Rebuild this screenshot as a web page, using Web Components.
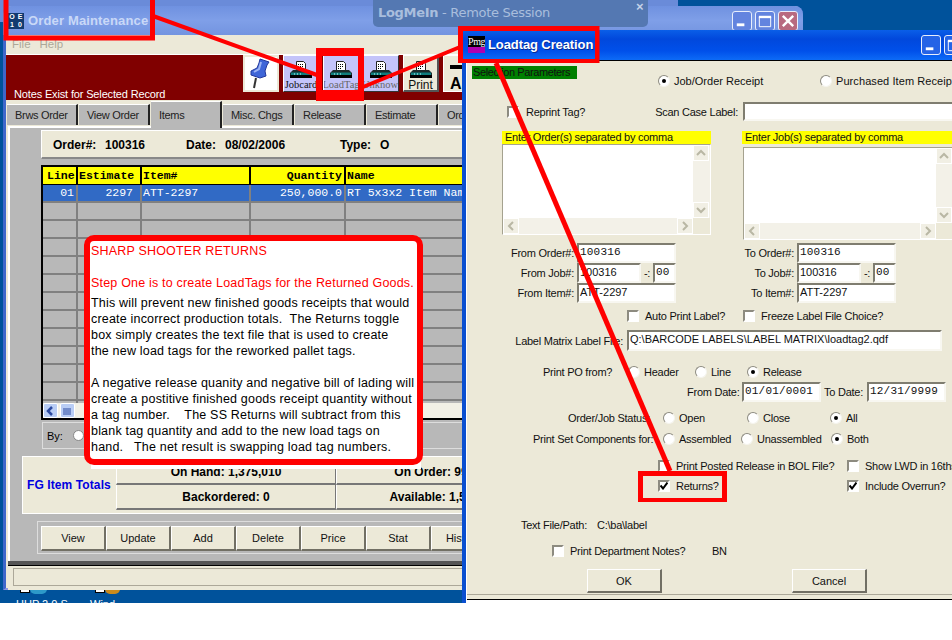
<!DOCTYPE html>
<html>
<head>
<meta charset="utf-8">
<title>Order Maintenance</title>
<style>
	html, body { margin: 0; background: #fff; }
	body { width: 952px; height: 640px; overflow: hidden; position: relative; font: 12px "Liberation Sans", Arial, sans-serif; color: #000; }
</style>
</head>
<body>
<desk-top>
	<order-window></order-window>
	<logmein-bar></logmein-bar>
	<loadtag-dialog></loadtag-dialog>
</desk-top>
<note-layer>SHARP SHOOTER RETURNS

Step One is to create LoadTags for the Returned Goods.</note-layer>

<script>
const SANS = `"Liberation Sans", Arial, sans-serif`;
const MONO = `"Liberation Mono", "Courier New", monospace`;

const PRINTER = `<svg width="24" height="19" viewBox="0 0 24 19">
	<path d="M7.5 .5h7l2 2v7h-9z" fill="#fff" stroke="#222"/>
	<path d="M9 3h1v1H9zM11 3h1v1h-1zM13 3h1v1h-1zM9 5h1v1H9zM11 5h1v1h-1zM13 5h1v1h-1zM9 7h1v1H9zM11 7h1v1h-1z" fill="#000"/>
	<path d="M4 9h16l3 3v2H1v-2z" fill="#1c2a2a"/>
	<path d="M2 11.500h20v2.500H2z" fill="#0e7d7d"/>
	<path d="M5 12.500h1v1H5zM8 12.500h1v1H8zM11 12.500h1v1h-1z" fill="#bff"/>
	<path d="M1 14h22v3H1z" fill="#000"/>
</svg>`;

const CHEVRONS = {
	up: '<polyline points="2,8 6,4 10,8"/>',
	down: '<polyline points="2,4 6,8 10,4"/>',
	left: '<polyline points="8,2 4,6 8,10"/>',
	right: '<polyline points="4,2 8,6 4,10"/>',
};

class DeskTop extends HTMLElement {
	constructor() {
		super();
		this.attachShadow({ mode: 'open' });
		this.shadowRoot.innerHTML = `
			<style>
				:host { display: block; position: relative; width: 952px; height: 603px; overflow: hidden; background: #00529b; }
				#back { position: absolute; left: 0; top: -8px; width: 678px; height: 30px; border-radius: 0 8px 0 0; background: #6a8bd9; }
				.icon { position: absolute; top: 589px; width: 10px; height: 4px; background: #fff; border: 1px solid #000; border-top: 0; box-sizing: border-box; }
				.blob { position: absolute; top: 589px; height: 5px; border-radius: 0 0 10px 10px; }
				.cap { position: absolute; top: 598px; color: #fff; font: 11px ${SANS}; white-space: nowrap; }
			</style>
			<div id="back"></div>
			<div class="icon" style="left:20px"></div>
			<div class="blob" style="left:30px;width:17px;background:#2d9ac9"></div>
			<div class="icon" style="left:95px"></div>
			<div class="blob" style="left:105px;width:15px;background:#c98a1d"></div>
			<div class="cap" style="left:16px">HUP 2.0 S</div>
			<div class="cap" style="left:90px">Wind</div>
			<slot></slot>
		`;
	}
}

class WinButton extends HTMLElement {
	constructor() {
		super();
		this.attachShadow({ mode: 'open' });
		const kind = this.getAttribute('kind');
		const glyph = {
			min: '<rect x="4" y="12" width="8" height="3" fill="#fff"/>',
			max: '<path d="M3.500 5.500h12v10h-12z" fill="none" stroke="#fff"/><rect x="3" y="4" width="13" height="2.500" fill="#fff"/>',
			close: '<path d="M4 4l11 11M15 4L4 15" stroke="#fff" stroke-width="2.500"/>',
		}[kind];
		this.shadowRoot.innerHTML = `
			<style>
				:host { display: block; width: 20px; height: 20px; box-sizing: border-box; border: 1px solid #e8eefc; border-radius: 3px; background: var(--btn, #2a5fe0); }
				:host([kind=close]) { background: var(--close, #c9492c); }
				svg { display: block; margin: 0; }
			</style>
			<svg width="18" height="18" viewBox="0 0 19 19">${glyph}</svg>
		`;
	}
}

class ToolBtn extends HTMLElement {
	constructor() {
		super();
		this.attachShadow({ mode: 'open' });
		this.shadowRoot.innerHTML = `
			<style>
				:host { display: flex; flex-direction: column; align-items: center; box-sizing: border-box; width: 36px; height: 37px; padding-top: 5px; background: #c4c4fa; border: 1px solid #333; border-left-color: #fff; border-top-color: #fff; overflow: hidden; white-space: nowrap; font: 10.500px "Liberation Serif", serif; color: #111; }
				:host([plain]) { background: #ece9d8; font: 12px ${SANS}; border-right: 2px solid #555; border-bottom: 2px solid #555; }
				:host([dim]) { color: #666; }
				svg { flex: none; }
				span { margin-top: -1px; line-height: 12px; }
			</style>
			${PRINTER}
			<span><slot></slot></span>
		`;
	}
}

class TabBtn extends HTMLElement {
	constructor() {
		super();
		this.attachShadow({ mode: 'open' });
		this.shadowRoot.innerHTML = `
			<style>
				:host { display: block; box-sizing: border-box; width: 71px; height: 21px; margin-top: 2px; padding-left: 8px; background: #b8b8b8; border-right: 2px solid #222; border-top: 1px solid #fff; font: 11px/20px ${SANS}; color: #222; white-space: nowrap; letter-spacing: -.3px; overflow: hidden; }
				:host([active]) { height: 27px; margin-top: -1px; margin-bottom: -3px; z-index: 1; position: relative; line-height: 26px; }
			</style>
			<slot></slot>
		`;
	}
}

class OrderGrid extends HTMLElement {
	constructor() {
		super();
		this.attachShadow({ mode: 'open' });
		const cols = '33px 62px 107px 93px 140px';
		let rows = '';
		for (let i = 0; i < 12; i++) {
			rows += '<div class="r"><i></i><i></i><i></i><i></i><i></i></div>';
		}
		this.shadowRoot.innerHTML = `
			<style>
				:host { display: block; box-sizing: border-box; width: 450px; height: 255px; border-top: 2px solid #000; border-left: 2px solid #000; border-bottom: 2px solid #000; background: #b8b8b8; font: 11.500px ${MONO}; position: relative; overflow: hidden; }
				.h, .r { display: grid; grid-template-columns: ${cols}; column-gap: 2px; }
				.h { height: 18px; background: #000; }
				.h b { background: #ff0; line-height: 17px; padding: 0 2px 0 1px; white-space: nowrap; overflow: hidden; border-bottom: 1px solid #000; }
				.h b:first-child { padding-left: 4px; }
				.right { text-align: right; }
				.r { height: 18px; box-sizing: border-box; border-bottom: 2px solid #808080; background: #808080; }
				.r i, .r span { background: #b8b8b8; display: block; }
				.sel span { background: #316ac5; color: #fff; line-height: 16px; padding: 0 2px 0 1px; white-space: pre; overflow: hidden; }
				.body { height: 218px; overflow: hidden; }
				.bar { display: flex; gap: 2px; height: 15px; background: #f2f0e6; }
				.bar div { width: 15px; background: #b9cdf5; border: 1px solid #fff; box-sizing: border-box; border-radius: 2px; text-align: center; color: #24408c; }
				svg { display: block; fill: none; stroke: #2c4aa0; stroke-width: 2.500; margin: 1px 0 0 0; }
			</style>
			<div class="h"><b>Line</b><b>Estimate</b><b>Item#</b><b class="right">Quantity</b><b>Name</b></div>
			<div class="body">
				<div class="r sel"><span class="right">01</span><span class="right" style="padding-right:7px">2297</span><span>ATT-2297</span><span class="right">250,000.0</span><span>RT 5x3x2 Item Name</span></div>
				${rows}
			</div>
			<div class="bar">
				<div><svg width="12" height="12" viewBox="0 0 12 12">${CHEVRONS.left}</svg></div>
				<div><svg width="12" height="12" viewBox="0 0 12 12"><path d="M3 3v7M5 3v7M7 3v7M9 3v7" stroke-width="1"/></svg></div>
			</div>
		`;
	}
}

class OrderWindow extends HTMLElement {
	constructor() {
		super();
		this.attachShadow({ mode: 'open' });
		this.shadowRoot.innerHTML = `
			<style>
				:host { display: flex; flex-direction: column; position: absolute; left: 3px; top: 6px; width: 800px; height: 584px; box-sizing: border-box; border: 3px solid #3f67cb; border-top: 0; border-bottom: 2px solid #8a96e4; border-radius: 8px 8px 0 0; background: #ece9d8; font: 12px ${SANS}; --btn: #6384df; --close: #b86a80; }
				#title { display: flex; align-items: center; height: 29px; flex: none; margin: 0 -3px; padding: 0 5px; background: linear-gradient(#6f91e0, #7f9fe8 50%, #7394e0); border-radius: 8px 8px 0 0; color: #c9d8f7; font: bold 13px ${SANS}; letter-spacing: .15px; }
				#logo { display: grid; grid-template-columns: 8px 8px; width: 16px; height: 16px; margin: 0 4px 0 0; background: #123a70; font: bold 7px/8px ${SANS}; color: #fff; text-align: center; letter-spacing: 0; flex: none; }
				#btns { margin-left: auto; display: flex; gap: 3px; }
				#menu { display: flex; gap: 9px; height: 19px; flex: none; box-sizing: content-box; padding-left: 6px; font-size: 11.500px; line-height: 18px; color: #aca899; border-bottom: 1px solid #fff; }
				#band { display: flex; height: 45px; background: #800000; flex: none; }
				#note { width: 237px; box-sizing: border-box; padding: 0 0 0 8px; align-self: flex-end; color: #fff; font-size: 11px; line-height: 12px; white-space: nowrap; letter-spacing: -.15px; }
				#tools { display: flex; align-items: flex-start; gap: 4px; }
				#pin { box-sizing: border-box; width: 36px; height: 37px; background: #fff; border: 2px solid #ece9d8; }
				#add { box-sizing: border-box; width: 50px; height: 37px; padding: 4px 0 0 6px; background: #ece9d8; border: 1px solid #fff; font: bold 16px/16px ${SANS}; overflow: hidden; }
				#add svg { display: block; margin-bottom: 1px; }
				#tabs { display: flex; gap: 1px; height: 26px; padding: 2px 0 0 1px; box-sizing: border-box; flex: none; }
				#panel { flex: 1; margin-left: 2px; border-top: 2px solid #fff; border-left: 2px solid #fff; background: #b8b8b8; padding: 2px 0 0 31px; display: flex; flex-direction: column; min-height: 0; }
				#head { display: flex; align-items: center; box-sizing: border-box; width: 440px; height: 29px; flex: none; padding: 2px 0 0 11px; background: #ece9d8; border: 1px solid #fff; border-right-color: #888; border-bottom: 2px solid #888; font: bold 12px ${SANS}; white-space: pre; }
				#head span { display: block; flex: none; }
				order-grid { margin-top: 6px; flex: none; }
				#by { display: flex; align-items: center; gap: 10px; box-sizing: border-box; width: 420px; height: 27px; flex: none; margin: 2px 0 0 1px; padding-left: 4px; border: 1px solid #ddd; border-right: 0; font-size: 11px; }
				#radio { width: 11px; height: 11px; border-radius: 50%; background: #fff; border: 1px solid #888; box-sizing: border-box; }
				#totals { display: flex; align-items: center; box-sizing: border-box; width: 700px; height: 58px; flex: none; margin: 7px 0 0 -19px; background: #ece9d8; border: 1px solid #fff; }
				#totals > b { width: 93px; padding-left: 4px; color: #0000e0; font: bold 12px ${SANS}; letter-spacing: .1px; white-space: nowrap; box-sizing: border-box; flex: none; }
				#cells { display: grid; grid-template-columns: 220px 220px; grid-auto-rows: 25px; }
				#cells b { text-align: center; font: bold 12px/24px ${SANS}; border-left: 1px solid #fff; border-right: 1px solid #777; border-bottom: 2px solid #777; box-sizing: border-box; white-space: nowrap; }
				#actions { display: flex; box-sizing: border-box; width: 560px; height: 33px; flex: none; margin: 7px 0 0 -4px; padding: 4px 3px; border: 1px solid #ddd; }
				#actions button { width: 65px; height: 25px; padding: 0; flex: none; background: #ece9d8; border: 1px solid #fff; border-right: 2px solid #716f64; border-bottom: 2px solid #716f64; font: 11px ${SANS}; color: #111; }
				#dark { height: 5px; flex: none; box-sizing: border-box; margin-top: 7px; margin-left: -33px; background: #555; border-bottom: 1px solid #000; }
				#status { flex: 1; padding: 2px 0 4px 5px; box-sizing: border-box; margin-left: -33px; background: #ece9d8; }
				#status div { height: 16px; border: 1px solid #aca899; border-right: 0; }
			</style>
			<div id="title">
				<div id="logo"><span>O</span><span>E</span><span>1</span><span>0</span></div>
				Order Maintenance
				<div id="btns"><win-button kind="min"></win-button><win-button kind="max"></win-button><win-button kind="close"></win-button></div>
			</div>
			<div id="menu"><span>File</span><span>Help</span></div>
			<div id="band">
				<div id="note">Notes Exist for Selected Record</div>
				<div id="tools">
					<div id="pin"><svg width="32" height="33" viewBox="0 0 32 33"><path d="M15 2l9 3-2 3-2 6 1 5-6 2-9-3v-4l6-3 2-5z" fill="#3f66d8" stroke="#23389c"/><path d="M16 5l-2 7-5 3" fill="none" stroke="#9db4f5" stroke-width="2"/><path d="M11 21L9 31" stroke="#333" stroke-width="2"/></svg></div>
					<tool-btn>Jobcard</tool-btn>
					<tool-btn dim>LoadTag</tool-btn>
					<tool-btn dim>Unknow.</tool-btn>
					<tool-btn plain>Print</tool-btn>
					<div id="add"><svg width="28" height="15" viewBox="0 0 28 15"><path d="M0 5h28v4H0zM12 0h4v15h-4z" fill="#000"/></svg>ADD</div>
				</div>
			</div>
			<div id="tabs">
				<tab-btn>Brws Order</tab-btn><tab-btn>View Order</tab-btn><tab-btn active>Items</tab-btn><tab-btn>Misc. Chgs</tab-btn><tab-btn>Release</tab-btn><tab-btn>Estimate</tab-btn><tab-btn>Order</tab-btn>
			</div>
			<div id="panel">
				<div id="head"><span style="width:52px">Order#:</span><span style="width:81px">100316</span><span style="width:39px">Date:</span><span style="width:115px">08/02/2006</span><span style="width:40px">Type:</span><span>O</span></div>
				<order-grid></order-grid>
				<div id="by">By: <div id="radio"></div></div>
				<div id="totals">
					<b>FG Item Totals</b>
					<div id="cells"><b>On Hand: 1,375,010</b><b>On Order: 995,000</b><b>Backordered: 0</b><b>Available: 1,500,000</b></div>
				</div>
				<div id="actions">
					<button>View</button><button>Update</button><button>Add</button><button>Delete</button><button>Price</button><button>Stat</button><button>History</button>
				</div>
				<div id="dark"></div>
				<div id="status"><div></div></div>
			</div>
		`;
	}
}

class LogmeinBar extends HTMLElement {
	constructor() {
		super();
		this.attachShadow({ mode: 'open' });
		this.shadowRoot.innerHTML = `
			<style>
				:host { display: block; position: absolute; left: 373px; top: 0; width: 275px; height: 27px; box-sizing: border-box; padding-left: 5px; border-radius: 0 0 5px 5px; background: #5478b2; color: #a9bedd; font: 13px/25px "DejaVu Sans", Verdana, sans-serif; white-space: nowrap; }
				b { font-weight: bold; }
				i { position: absolute; left: 263px; top: 0; font: bold 13px/14px ${SANS}; color: #c4d2e8; }
				span { letter-spacing: -.3px; }
			</style>
			<span><b>LogMeIn</b> - Remote Session</span><i>×</i>
		`;
	}
}

class XpRadio extends HTMLElement {
	constructor() {
		super();
		this.attachShadow({ mode: 'open' });
		this.shadowRoot.innerHTML = `
			<style>
				:host { display: flex; align-items: center; flex: none; gap: 4px; white-space: nowrap; }
				i { display: block; flex: none; box-sizing: border-box; width: 12px; height: 12px; border-radius: 50%; background: #fff; border: 1px solid; border-color: #8d8b80 #f5f4ee #f5f4ee #8d8b80; position: relative; }
				:host([on]) i::after { content: ""; position: absolute; left: 3px; top: 3px; width: 4px; height: 4px; border-radius: 50%; background: #000; }
			</style>
			<i></i><span><slot></slot></span>
		`;
	}
}

class XpCheck extends HTMLElement {
	constructor() {
		super();
		this.attachShadow({ mode: 'open' });
		this.shadowRoot.innerHTML = `
			<style>
				:host { display: flex; align-items: center; flex: none; gap: 6px; white-space: nowrap; }
				i { display: block; flex: none; box-sizing: border-box; width: 12px; height: 12px; background: #fff; border: 2px solid; border-color: #8d8b80 #fff #fff #8d8b80; }
				svg { display: none; }
				:host([on]) svg { display: block; }
			</style>
			<i><svg width="8" height="8" viewBox="0 0 8 8"><path d="M.5 3.500L3 6.500 7.500 .5" fill="none" stroke="#000" stroke-width="2"/></svg></i>
			<span><slot></slot></span>
		`;
	}
}

class XpInput extends HTMLElement {
	constructor() {
		super();
		this.attachShadow({ mode: 'open' });
		this.shadowRoot.innerHTML = `
			<style>
				:host { display: block; flex: none; box-sizing: border-box; height: 20px; padding-left: 1px; background: #fff; border: 2px solid; border-color: #7f7d70 #f8f7f1 #f8f7f1 #7f7d70; font: 11px/15px ${SANS}; white-space: nowrap; overflow: hidden; letter-spacing: 0; }
				:host([mono]) { font: 11px/15px ${MONO}; letter-spacing: .2px; }
			</style>
			<slot></slot>
		`;
	}
}

class XpList extends HTMLElement {
	constructor() {
		super();
		this.attachShadow({ mode: 'open' });
		const chev = (d) => `<div class="b"><svg width="12" height="12" viewBox="0 0 12 12">${CHEVRONS[d]}</svg></div>`;
		this.shadowRoot.innerHTML = `
			<style>
				:host { display: grid; grid-template-columns: 1fr 17px; grid-template-rows: 1fr 16px; box-sizing: border-box; background: #fff; border: 1px solid #a5a28f; border-right-color: #fff; border-bottom-color: #fff; }
				.v, .h { display: flex; justify-content: space-between; background: #f3f1e8; }
				.v { flex-direction: column; }
				.b { box-sizing: border-box; width: 16px; height: 16px; background: #f1efe4; border: 1px solid #fff; display: flex; align-items: center; justify-content: center; }
				svg { fill: none; stroke: #b9b7a4; stroke-width: 2; }
			</style>
			<div></div>
			<div class="v">${chev('up')}${chev('down')}</div>
			<div class="h">${chev('left')}${chev('right')}</div>
			<div style="background:#ece9d8"></div>
		`;
	}
}

class LoadtagDialog extends HTMLElement {
	constructor() {
		super();
		this.attachShadow({ mode: 'open' });
		this.shadowRoot.innerHTML = `
			<style>
				:host { display: flex; flex-direction: column; position: absolute; left: 462px; top: 30px; width: 530px; height: 573px; box-sizing: border-box; border-left: 4px solid #0a4fd0; background: #fff; font: 11px ${SANS}; color: #111; --btn: #2563e6; }
				#title { display: flex; align-items: center; height: 31px; flex: none; margin-left: -4px; padding: 0 5px 1px 6px; box-sizing: border-box; border-bottom: 1px solid #000; background: linear-gradient(#0a5fe8, #0148dc 30%, #0050ea 70%, #0d6bf7); color: #fff; font: bold 13px ${SANS}; letter-spacing: -.1px; text-shadow: 1px 1px #0a2a90; }
				#logo { width: 17px; height: 17px; margin-right: 3px; flex: none; background: linear-gradient(#000 65%, #b000b0 65%); color: #fff; font: 10px/12px "Liberation Serif", serif; letter-spacing: -.5px; text-align: center; text-shadow: none; overflow: hidden; }
				#btns { display: flex; gap: 3px; margin-left: auto; }
				#form { height: 533px; flex: none; background: #ece9d8; margin-left: 1px; display: flex; flex-direction: column; letter-spacing: -.25px; }
				#foot { height: 6px; flex: none; box-sizing: border-box; margin-left: 1px; background: #ece9d8; border-top: 1px solid #aca899; border-bottom: 1px solid #000; }
				.row { display: flex; align-items: center; flex: none; }
				.lab { flex: none; text-align: right; white-space: nowrap; }
				.left { text-align: left; }
				#green { box-sizing: border-box; width: 105px; height: 13px; margin-left: 5px; padding-left: 1px; background: #008000; line-height: 13px; white-space: nowrap; flex: none; letter-spacing: -.4px; }
				.yellow { height: 13px; background: #ff0; line-height: 13px; white-space: nowrap; padding-left: 3px; }
				.col { display: flex; flex-direction: column; flex: none; }
				.col .row { height: 20px; }
				.col .lab { margin-right: 3px; }
				.dash { width: 12px; flex: none; text-align: center; }
				button { box-sizing: border-box; flex: none; width: 75px; height: 24px; padding: 0; background: #ece9d8; border: 1px solid #fff; border-right: 2px solid #716f64; border-bottom: 2px solid #716f64; font: 11px ${SANS}; color: #111; }
			</style>
			<div id="title">
				<div id="logo">Pmg</div>Loadtag Creation
				<div id="btns"><win-button kind="min"></win-button><win-button kind="max"></win-button><win-button kind="close"></win-button></div>
			</div>
			<div id="form">
				<div class="row" style="height:22px;margin-top:5px;align-items:flex-start">
					<div id="green">Selection Parameters</div>
					<xp-radio on style="margin:9px 0 0 81px;width:162px;letter-spacing:0">Job/Order Receipt</xp-radio>
					<xp-radio style="margin-top:9px;letter-spacing:.08px">Purchased Item Receipt</xp-radio>
				</div>
				<div class="row" style="height:19px;margin-top:14px">
					<xp-check style="margin-left:40px;width:130px;gap:7px">Reprint Tag?</xp-check>
					<div class="lab" style="width:101px;margin-right:5px">Scan Case Label:</div>
					<xp-input style="width:220px;height:19px"></xp-input>
				</div>
				<div class="row" style="height:109px;margin-top:10px;align-items:flex-start">
					<div class="col" style="margin-left:35px;width:209px">
						<div class="yellow">Enter Order(s) separated by comma</div>
						<xp-list style="height:91px"></xp-list>
					</div>
					<div class="col" style="margin-left:31px;width:212px">
						<div class="yellow">Enter Job(s) separated by comma</div>
						<xp-list style="height:93px;margin:3px 0 0 1px"></xp-list>
					</div>
				</div>
				<div class="row" style="height:60px;margin-top:3px;align-items:flex-start">
					<div class="col">
						<div class="row"><div class="lab" style="width:107px">From Order#:</div><xp-input mono style="width:99px">100316</xp-input></div>
						<div class="row"><div class="lab" style="width:107px">From Job#:</div><xp-input style="width:64px">100316</xp-input><div class="dash">-:</div><xp-input mono style="width:23px">00</xp-input></div>
						<div class="row"><div class="lab" style="width:107px">From Item#:</div><xp-input style="width:99px">ATT-2297</xp-input></div>
					</div>
					<div class="col">
						<div class="row"><div class="lab" style="width:118px">To Order#:</div><xp-input mono style="width:99px">100316</xp-input></div>
						<div class="row"><div class="lab" style="width:118px">To Job#:</div><xp-input style="width:64px">100316</xp-input><div class="dash">-:</div><xp-input mono style="width:23px">00</xp-input></div>
						<div class="row"><div class="lab" style="width:118px">To Item#:</div><xp-input style="width:99px">ATT-2297</xp-input></div>
					</div>
				</div>
				<div class="row" style="height:12px;margin-top:7px">
					<xp-check style="margin-left:160px;width:116px">Auto Print Label?</xp-check>
					<xp-check>Freeze Label File Choice?</xp-check>
				</div>
				<div class="row" style="height:21px;margin-top:8px">
					<div class="lab" style="width:156px;margin-right:4px">Label Matrix Label File:</div>
					<xp-input style="width:315px;height:21px">Q:\\BARCODE LABELS\\LABEL MATRIX\\loadtag2.qdf</xp-input>
				</div>
				<div class="row" style="height:20px;margin-top:11px">
					<div class="lab left" style="margin-left:76px;width:85px">Print PO from?</div>
					<xp-radio style="width:67px">Header</xp-radio>
					<xp-radio style="width:52px">Line</xp-radio>
					<xp-radio on>Release</xp-radio>
				</div>
				<div class="row" style="height:20px">
					<div class="lab" style="margin-left:220px;width:51px;margin-right:4px">From Date:</div>
					<xp-input mono style="width:79px">01/01/0001</xp-input>
					<div class="lab" style="width:42px;margin-right:4px">To Date:</div>
					<xp-input mono style="width:79px">12/31/9999</xp-input>
				</div>
				<div class="row" style="height:20px;margin-top:6px">
					<div class="lab left" style="margin-left:101px;width:95px">Order/Job Status:</div>
					<xp-radio style="width:84px">Open</xp-radio>
					<xp-radio style="width:83px">Close</xp-radio>
					<xp-radio on>All</xp-radio>
				</div>
				<div class="row" style="height:20px;margin-top:1px">
					<div class="lab left" style="margin-left:66px;width:130px">Print Set Components for:</div>
					<xp-radio style="width:78px">Assembled</xp-radio>
					<xp-radio style="width:90px">Unassembled</xp-radio>
					<xp-radio on>Both</xp-radio>
				</div>
				<div class="row" style="height:12px;margin-top:11px">
					<xp-check style="margin-left:191px;width:189px">Print Posted Release in BOL File?</xp-check>
					<xp-check>Show LWD in 16ths?</xp-check>
				</div>
				<div class="row" style="height:12px;margin-top:8px">
					<xp-check on style="margin-left:191px;width:189px">Returns?</xp-check>
					<xp-check on>Include Overrun?</xp-check>
				</div>
				<div class="row" style="height:14px;margin-top:26px">
					<div class="lab left" style="margin-left:54px;width:76px">Text File/Path:</div>C:\\ba\\label
				</div>
				<div class="row" style="height:12px;margin-top:13px">
					<xp-check style="margin-left:85px;width:160px">Print Department Notes?</xp-check>BN
				</div>
				<div class="row" style="height:24px;margin-top:12px">
					<button style="margin-left:120px">OK</button>
					<button style="margin-left:130px">Cancel</button>
				</div>
			</div>
			<div id="foot"></div>
		`;
	}
}

class NoteLayer extends HTMLElement {
	constructor() {
		super();
		this.attachShadow({ mode: 'open' });
		this.shadowRoot.innerHTML = `
			<style>
				:host { display: block; position: absolute; left: 0; top: 0; width: 952px; height: 640px; pointer-events: none; }
				svg { position: absolute; left: 0; top: 0; }
				#under { position: absolute; left: 91px; top: 460px; width: 330px; height: 9px; background: #fff; }
				#card { position: absolute; left: 84px; top: 235px; width: 339px; height: 230px; box-sizing: border-box; padding: 2px 0 0 1px; background: #fff; border: 6px solid #f00; border-radius: 10px; font: 12.500px/16px ${SANS}; letter-spacing: .19px; white-space: pre; color: #000; }
				#red { color: #f00; height: 48px; margin-bottom: 4px; }
			</style>
			<svg width="952" height="640" fill="none" stroke="#f00">
				<path d="M153 16L317 75" stroke-width="4"/>
				<path d="M363 87L460 47" stroke-width="4"/>
				<path d="M496 63L670 471" stroke-width="5"/>
				<path d="M6 -3H152.500V38H6z" stroke-width="5"/>
				<path d="M5 0h2v38H5z" stroke-width="0" fill="#f00"/>
				<path d="M316 48h48v53h-48zM322 56v34h36v-34z" stroke-width="0" fill="#f00" fill-rule="evenodd"/>
				<path d="M458 26h141.500v37h-141.500zM463 31v28h132v-28z" stroke-width="0" fill="#f00" fill-rule="evenodd"/>
				<path d="M638 471h89v31h-89zM643 476v22h79v-22z" stroke-width="0" fill="#f00" fill-rule="evenodd"/>
			</svg>
			<div id="under"></div>
			<div id="card"><div id="red"><slot></slot></div>This will prevent new finished goods receipts that would
create incorrect production totals.  The Returns toggle
box simply creates the text file that is used to create
the new load tags for the reworked pallet tags.

A negative release quanity and negative bill of lading will
create a postitive finished goods receipt quantity without
a tag number.    The SS Returns will subtract from this
blank tag quantity and add to the new load tags on
hand.   The net result is swapping load tag numbers.</div>
		`;
	}
}

customElements.define('win-button', WinButton);
customElements.define('tool-btn', ToolBtn);
customElements.define('tab-btn', TabBtn);
customElements.define('order-grid', OrderGrid);
customElements.define('xp-radio', XpRadio);
customElements.define('xp-check', XpCheck);
customElements.define('xp-input', XpInput);
customElements.define('xp-list', XpList);
customElements.define('order-window', OrderWindow);
customElements.define('logmein-bar', LogmeinBar);
customElements.define('loadtag-dialog', LoadtagDialog);
customElements.define('note-layer', NoteLayer);
customElements.define('desk-top', DeskTop);
</script>
</body>
</html>
